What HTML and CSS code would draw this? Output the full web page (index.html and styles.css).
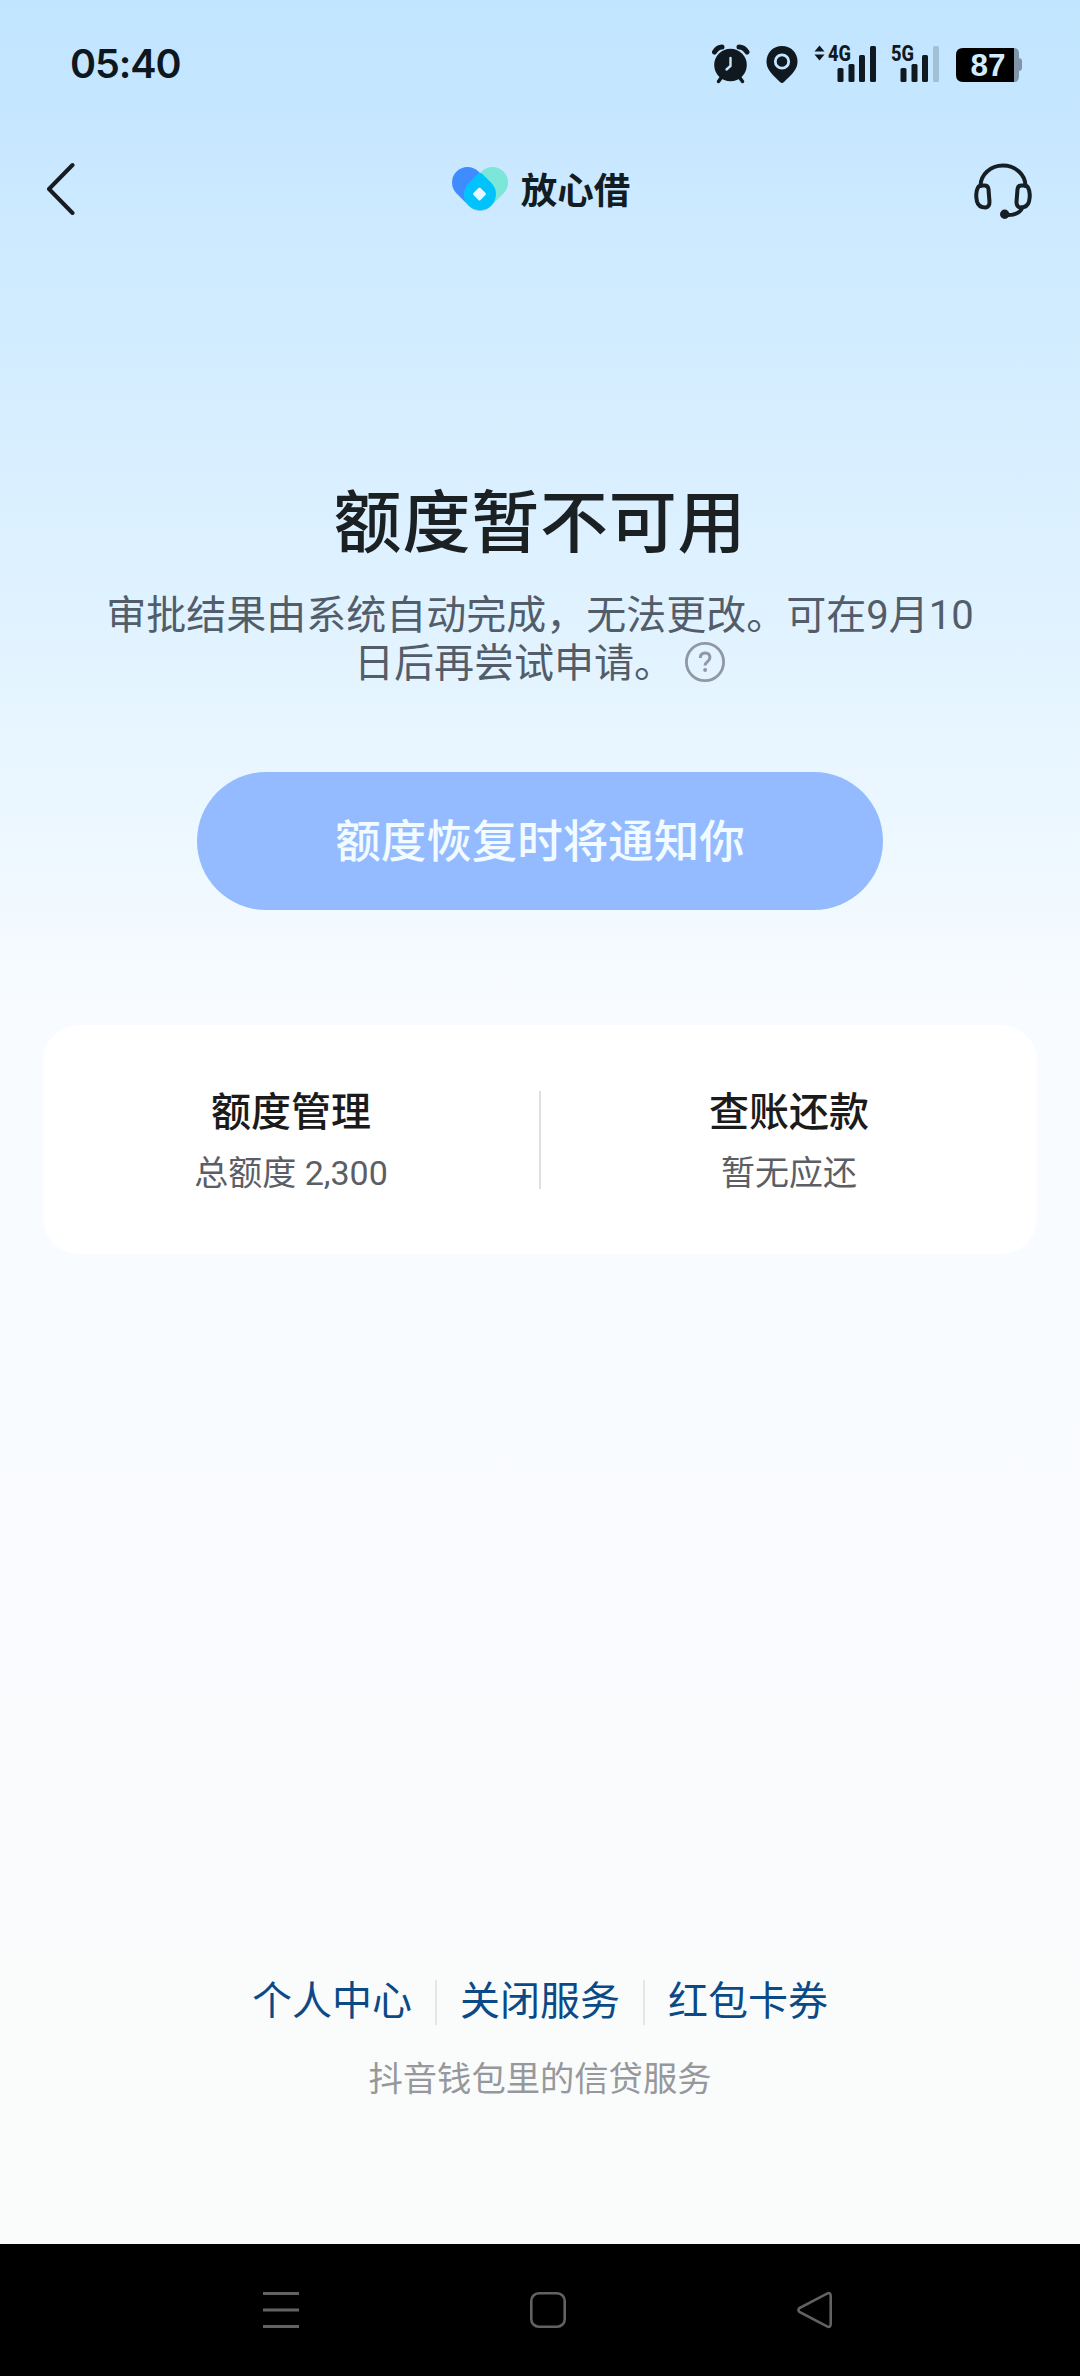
FILE: index.html
```html
<!DOCTYPE html>
<html lang="zh-CN">
<head>
<meta charset="utf-8">
<title>放心借</title>
<link rel="stylesheet" href="styles.css">
</head>
<body>
<div class="screen">
  <div class="status">
    <span class="clock">05:40</span>
    <div class="status-icons">
      <svg class="alarm" width="38" height="56" viewBox="712 36 38 56">
        <circle cx="730.5" cy="65" r="16.3" fill="#10191f"/>
        <path d="M714.500 52q3-5 7.500-5M739 47q5 0 8 5" fill="none" stroke="#10191f" stroke-width="5" stroke-linecap="round"/>
        <path d="M721 78l-2.500 3.500M740 78l2.500 3.500" stroke="#10191f" stroke-width="3.500" stroke-linecap="round"/>
        <path d="M730.500 58v8l-4 3.500" fill="none" stroke="#c4e6ff" stroke-width="2.400" stroke-linecap="round"/>
      </svg>
      <svg class="pin" width="34" height="56" viewBox="765 36 34 56">
        <path d="M782 46c-9 0-15.500 6.800-15.500 15.500 0 7 4 11.500 13.500 20.500q2 2 4 0c9.500-9 13.500-13.500 13.500-20.500C797.500 52.800 791 46 782 46z" fill="#10191f"/>
        <circle cx="782" cy="61.500" r="6.700" fill="none" stroke="#c4e6ff" stroke-width="2.800"/>
      </svg>
      <svg class="sig4" width="64" height="56" viewBox="813 36 64 56">
        <path d="M819.500 45.500l5 6h-10zM819.500 60.500l5-6h-10z" fill="#10191f"/>
        <text x="828" y="61" class="net" textLength="23" lengthAdjust="spacingAndGlyphs">4G</text>
        <g fill="#10191f"><rect x="837.500" y="68" width="6" height="14" rx="1.500"/><rect x="848.500" y="64" width="6" height="18" rx="1.500"/><rect x="859" y="55" width="6" height="27" rx="1.500"/><rect x="870" y="46" width="6" height="36" rx="1.500"/></g>
      </svg>
      <svg class="sig5" width="50" height="56" viewBox="890 36 50 56">
        <text x="891" y="61" class="net" textLength="23" lengthAdjust="spacingAndGlyphs">5G</text>
        <g fill="#10191f"><rect x="900.500" y="68" width="6" height="14" rx="1.500"/><rect x="911.500" y="64" width="6" height="18" rx="1.500"/><rect x="922" y="55" width="6" height="27" rx="1.500"/></g><rect x="933" y="46" width="6" height="36" rx="1.500" fill="#a1bfd5"/>
      </svg>
      <svg class="battery" width="68" height="56" viewBox="955 36 68 56">
        <path d="M1012 48h2q5 0 5 6v4q3 .5 3 3v7q0 2.500-3 3v5q0 6-5 6h-2z" fill="#8096a8"/>
        <path d="M1014 48v34h-51q-7 0-7-7V55q0-7 7-7z" fill="#000"/>
        <text x="970.500" y="76.300" class="charge" textLength="35" lengthAdjust="spacingAndGlyphs">87</text>
      </svg>
    </div>
  </div>

  <header class="header">
    <svg width="30" height="60" viewBox="45 159 30 60"><path d="M72.500 165L49 189l23.500 24" fill="none" stroke="#161c21" stroke-width="4" stroke-linecap="round" stroke-linejoin="round"/></svg>
    <div class="brand">
      <svg width="58" height="46" viewBox="451 167 58 46" stroke-linecap="round">
        <path d="M467.500 183.500L480 196" stroke="#3f8cff" stroke-width="31"/>
        <path d="M492.500 183.500L480 196" stroke="#7ce6d8" stroke-width="31"/>
        <path d="M468.600 184l9-9q2.400-2.200 4.800 0l9 9a16 16 0 1 1-22.800 0z" fill="#00c3fb"/>
        <rect x="474.500" y="190" width="10" height="10" rx="1.500" transform="rotate(45 479.500 195)" fill="#e6f7ff"/>
      </svg>
      <span class="brand-name">放心借</span>
    </div>
    <svg width="60" height="60" viewBox="972 159 60 60" fill="none" stroke="#161f24" stroke-width="4" stroke-linecap="round" stroke-linejoin="round">
      <path d="M980.500 186a22.300 20.300 0 0 1 45 0"/>
      <path d="M982 185.500h2.500q3.500 0 4 3.500l1 13q0 5-4 5.500-7 0-8.500-6-2-9 1-14 1-2 4-2zM1024 185.500h-2.500q-3.500 0-4 3.500l-1 13q0 5 4 5.500 7 0 8.500-6 2-9-1-14-1-2-4-2z"/>
      <path d="M1022.500 207.500q-3.500 7.500-14 7.500"/><circle cx="1004.700" cy="214.300" r="2.700" fill="#161f24"/>
    </svg>
  </header>

  <main class="main">
    <h1 class="title">额度暂不可用</h1>
    <p class="desc">审批结果由系统自动完成，无法更改。可在9月10<br>日后再尝试申请。<svg class="help" width="42" height="42" viewBox="0 0 42 42" fill="none" stroke="#8f98a3"><circle cx="21" cy="21" r="18.600" stroke-width="2.800"/><path d="M16.300 17q0-5 4.800-5t4.800 4.600q0 2.200-2.400 4-2.400 1.700-2.400 4" stroke-width="3"/><circle cx="21.100" cy="29" r="2" fill="#8f98a3" stroke="none"/></svg></p>
    <button class="notify">额度恢复时将通知你</button>
    <section class="card">
      <div class="cell"><h2 class="cell-title">额度管理</h2><p class="cell-sub">总额度 2,300</p></div>
      <div class="card-line"></div>
      <div class="cell"><h2 class="cell-title">查账还款</h2><p class="cell-sub">暂无应还</p></div>
    </section>
  </main>

  <footer class="footer">
    <nav class="links"><a>个人中心</a><i class="sep"></i><a>关闭服务</a><i class="sep"></i><a>红包卡券</a></nav>
    <p class="note">抖音钱包里的信贷服务</p>
  </footer>

  <div class="navbar">
    <svg width="38" height="38" viewBox="0 0 38 38" stroke="#626262" stroke-width="3"><path d="M1 2.500h36M1 19h36M1 35.500h36"/></svg>
    <svg width="38" height="38" viewBox="0 0 38 38" fill="none" stroke="#626262" stroke-width="2.600"><rect x="2.300" y="2.300" width="33.400" height="33.400" rx="7.500"/></svg>
    <svg width="38" height="38" viewBox="0 0 38 38" fill="none" stroke="#626262" stroke-width="2.600"><path d="M3.500 17Q1.500 19 3.500 21L31 35.400Q34.700 37 34.700 33V5Q34.700 1 31 2.600Z"/></svg>
  </div>
</div>
</body>
</html>
```
FILE: styles.css
```css
* { box-sizing: border-box; margin: 0; padding: 0; }
body { font-family: Roboto, "Noto Sans CJK SC", sans-serif; color: #1b2023; }
svg { display: block; flex: none; }
.screen {
  width: 1080px; height: 2376px; display: flex; flex-direction: column;
  background: linear-gradient(#c2e5ff 0, #c4e6ff 90px, #cbe9ff 190px, #d9efff 470px, #e4f4ff 680px, #f0f9ff 890px, #f8fbff 1010px, #f9fbff 1500px, #fafcfc 2000px, #fafcfb 2244px);
}
.status { height: 128px; padding: 0 57px 0 70px; display: flex; justify-content: space-between; align-items: center; }
.clock { font: 600 39.500px/48px Inter, sans-serif; color: #0d171d; letter-spacing: -1.100px; }
.status-icons { display: flex; }
.pin { margin-left: 15px; }
.sig4 { margin-left: 14px; }
.sig5 { margin-left: 13px; }
.battery { margin-left: 15px; }
.net { font: 800 22px Roboto, sans-serif; fill: #10191f; }
.charge { font: 700 32px "Liberation Sans", sans-serif; fill: #d2ecff; }
.header { height: 122px; padding: 0 48px 0 45px; display: flex; justify-content: space-between; align-items: center; }
.brand { margin-left: 34px; display: flex; align-items: center; gap: 12px; }
.brand-name { font: 700 36.500px/44px "Noto Sans CJK SC", sans-serif; color: #111c23; }
.main { display: flex; flex-direction: column; align-items: center; padding: 228px 43px 0; }
.title { font-size: 68px; line-height: 92px; font-weight: 500; letter-spacing: .8px; }
.desc { margin-top: 22px; font-size: 40px; line-height: 47.500px; text-align: center; color: #535d69; white-space: nowrap; }
.help { display: inline-block; vertical-align: -6px; margin-left: 10px; }
.notify { margin-top: 85px; width: 686px; height: 138px; padding-bottom: 6px; border: 0; border-radius: 69px; background: #94bbff; color: #f2fbff; font: 500 45.500px/60px "Noto Sans CJK SC", sans-serif; }
.card { margin-top: 115px; width: 994px; height: 229px; border-radius: 36px; background: #fff; display: flex; align-items: center; }
.cell { flex: 1; padding-top: 7px; text-align: center; }
.cell-title { font-size: 40px; line-height: 60px; font-weight: 500; color: #1b1b1b; }
.cell-sub { font-size: 34px; line-height: 60px; color: #5c5e65; }
.card-line { width: 2px; height: 98px; background: #e0e0e1; }
.footer { margin-top: auto; padding-bottom: 135px; display: flex; flex-direction: column; align-items: center; }
.links { display: flex; align-items: center; gap: 23px; font-size: 40px; line-height: 60px; color: #0b4a87; }
.sep { width: 2px; height: 45px; background: #e3e5e7; }
.note { margin-top: 17px; font-size: 34.300px; line-height: 60px; color: #96989c; }
.navbar { height: 132px; background: #000; display: flex; justify-content: space-between; align-items: center; padding: 0 246px 0 262px; }
```
